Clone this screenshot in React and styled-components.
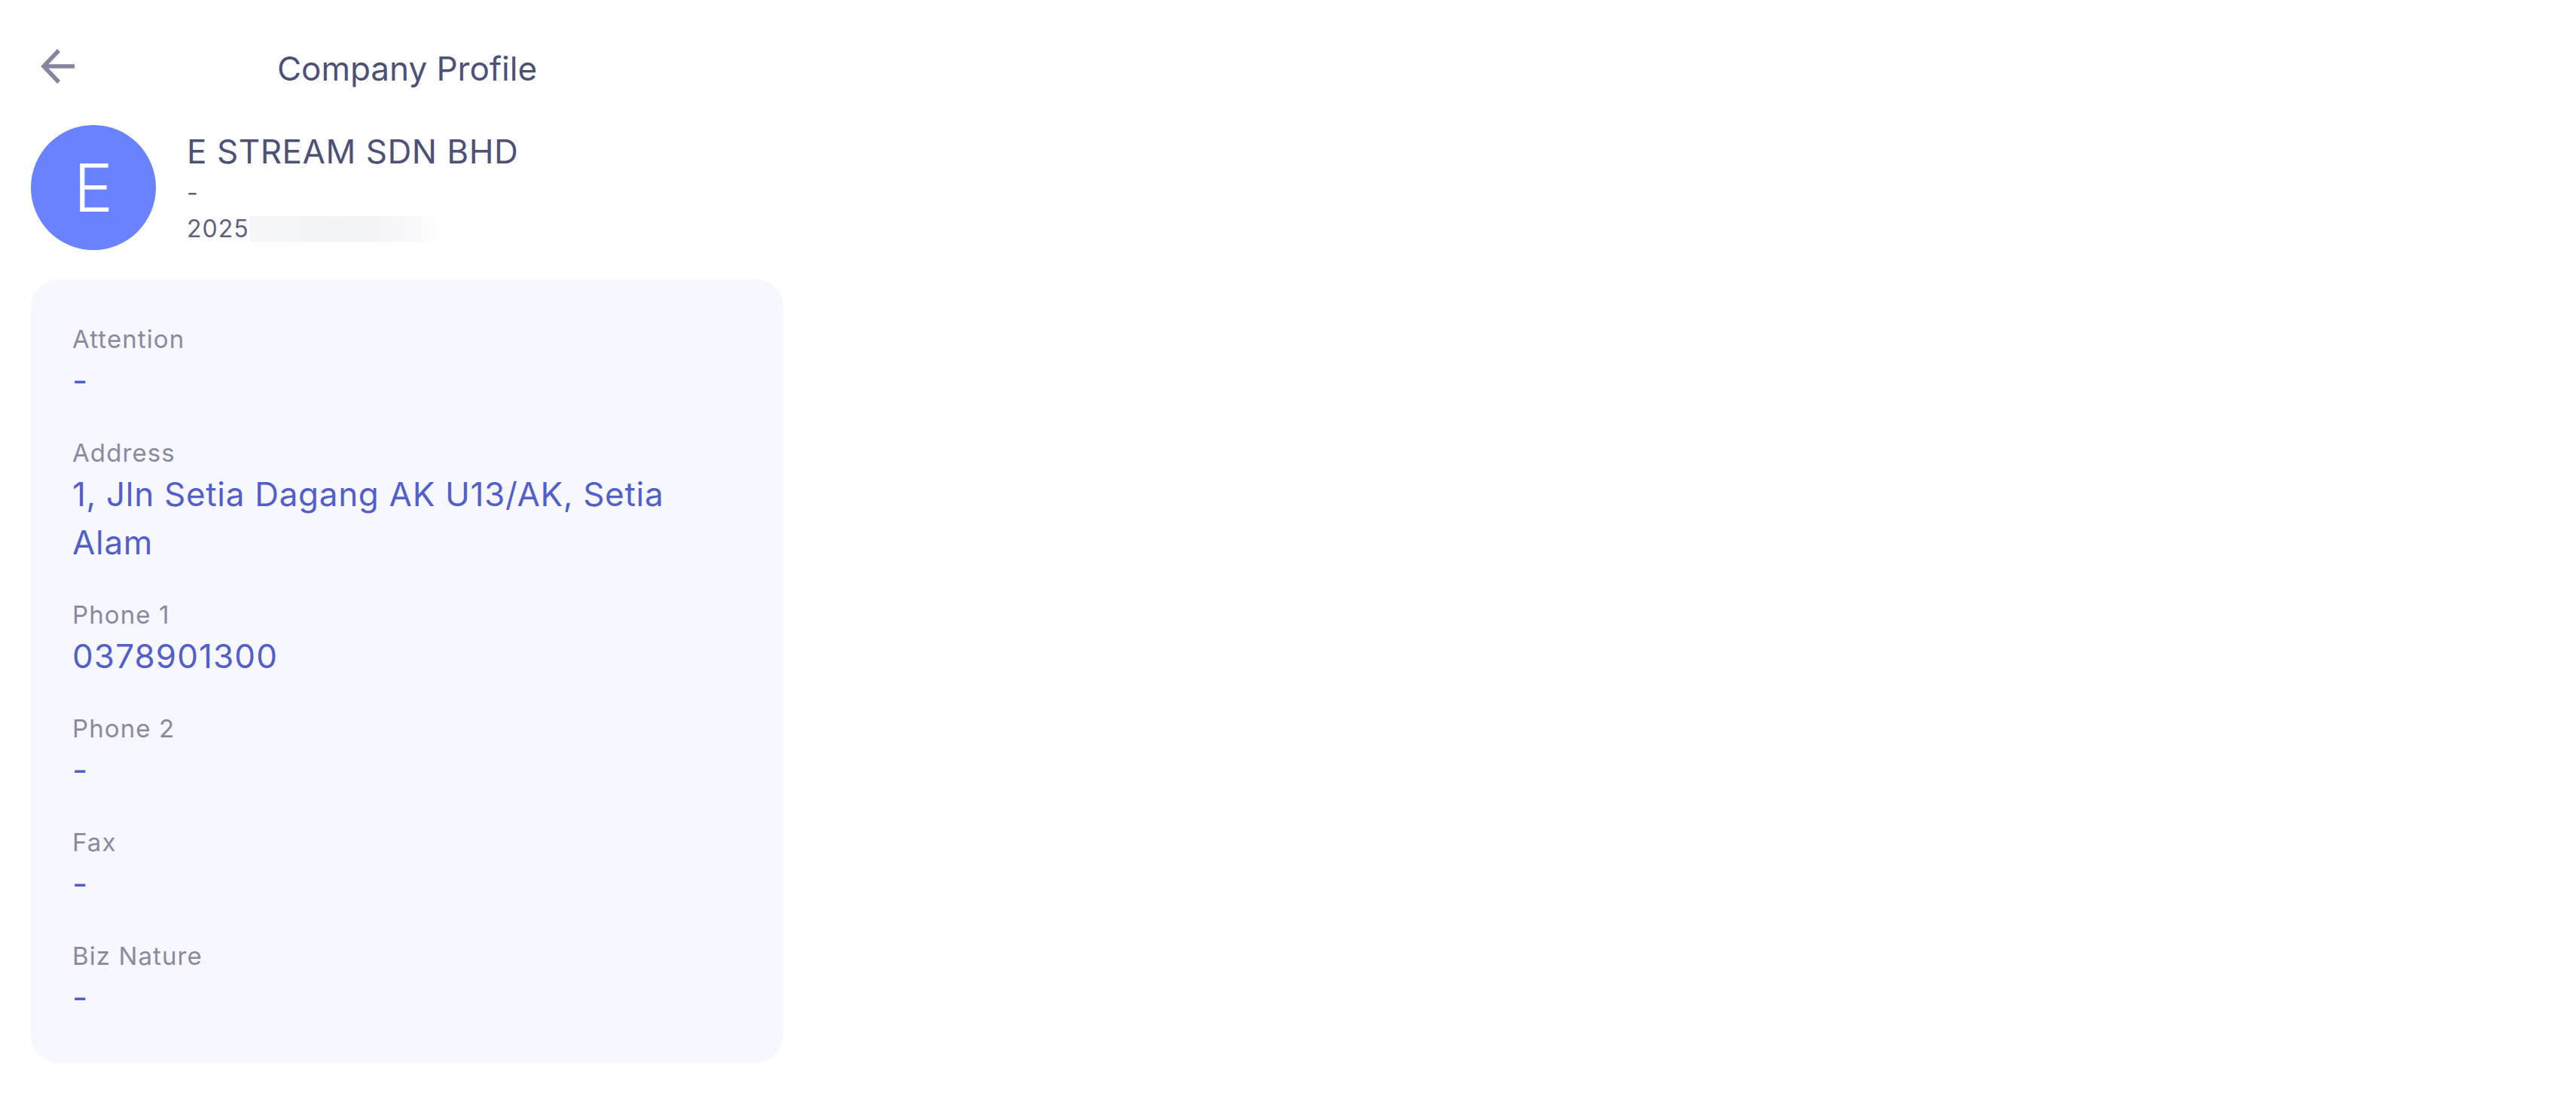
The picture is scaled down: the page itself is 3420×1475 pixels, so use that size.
import React from "react";
import styled, { createGlobalStyle } from "styled-components";

const Global = createGlobalStyle`
  html, body { margin: 0; padding: 0; background: #ffffff; }
  body { font-family: Inter, "Noto Sans", sans-serif; }
  * { box-sizing: border-box; }
`;

const Page = styled.div`
  width: 1080px;
  padding: 58px 0 0 41px;
  display: flex;
  flex-direction: column;
`;

const TopBar = styled.header`
  position: relative;
  width: 999px;
  height: 66px;
  display: flex;
  align-items: center;
  justify-content: center;
`;

const BackButton = styled.button`
  position: absolute;
  left: 10px;
  top: 2px;
  width: 54px;
  height: 56px;
  padding: 0;
  border: 0;
  background: none;
  color: #8685a0;
  display: flex;
  align-items: center;
  justify-content: center;
`;

const Title = styled.h1`
  margin: 0;
  font-size: 44px;
  line-height: 66px;
  font-weight: 430;
  color: #4e5176;
`;

const Company = styled.section`
  margin-top: 42px;
  display: flex;
  align-items: center;
  gap: 41px;
`;

const Avatar = styled.div`
  width: 166px;
  height: 166px;
  border-radius: 50%;
  background: #6b82ff;
  color: #ffffff;
  font-size: 88px;
  font-weight: 300;
  display: flex;
  align-items: center;
  justify-content: center;
`;

const CompanyText = styled.div`
  display: flex;
  flex-direction: column;
`;

const CompanyName = styled.div`
  font-size: 44px;
  line-height: 60px;
  letter-spacing: 0.55px;
  color: #4e5176;
`;

const CompanyLine = styled.div`
  font-size: 32px;
  line-height: 48px;
  letter-spacing: 1px;
  color: #5f617f;
  display: flex;
  align-items: center;
  transform: translateY(1px);
`;

const Redacted = styled.span`
  width: 247px;
  height: 34px;
  background: linear-gradient(90deg, #f7f7f9 0%, #f2f3f5 45%, #f5f5f7 75%, #fdfdfe 100%);
`;

const Card = styled.section`
  margin-top: 39px;
  width: 999px;
  height: 1040px;
  padding: 56px 55px;
  border-radius: 36px;
  background: #f7f8ff;
  display: flex;
  flex-direction: column;
  gap: 41px;
`;

const Field = styled.div`
  display: flex;
  flex-direction: column;
`;

const Label = styled.div`
  font-size: 33px;
  line-height: 46px;
  letter-spacing: 1.1px;
  color: #8a8a9f;
`;

const Value = styled.div`
  font-size: 44px;
  line-height: 64px;
  letter-spacing: ${(p) => (p.$digits ? "1.1px" : "0.7px")};
  color: #525fc8;
`;

const fields = [
  ["Attention", "-"],
  ["Address", "1, Jln Setia Dagang AK U13/AK, Setia Alam"],
  ["Phone 1", "0378901300", true],
  ["Phone 2", "-"],
  ["Fax", "-"],
  ["Biz Nature", "-"],
];

export default function App() {
  return (
    <Page>
      <Global />
      <TopBar>
        <BackButton aria-label="Back">
          <svg width="54" height="56" viewBox="0 0 54 56" fill="none" stroke="currentColor" strokeWidth="5.5">
            <path d="M48 28H7" />
            <path d="M27 7L7 28l20 21" />
          </svg>
        </BackButton>
        <Title>Company Profile</Title>
      </TopBar>
      <Company>
        <Avatar>E</Avatar>
        <CompanyText>
          <CompanyName>E STREAM SDN BHD</CompanyName>
          <CompanyLine>-</CompanyLine>
          <CompanyLine>2025<Redacted /></CompanyLine>
        </CompanyText>
      </Company>
      <Card>
        {fields.map(([label, value, digits]) => (
          <Field key={label}>
            <Label>{label}</Label>
            <Value $digits={digits}>{value}</Value>
          </Field>
        ))}
      </Card>
    </Page>
  );
}
